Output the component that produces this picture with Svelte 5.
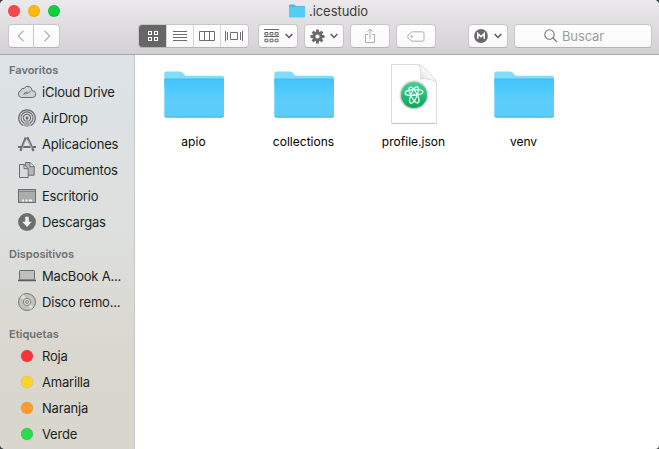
<script>
  const sections = [
    {
      title: 'Favoritos',
      items: [
        ['cloud', 'iCloud Drive'],
        ['airdrop', 'AirDrop'],
        ['apps', 'Aplicaciones'],
        ['docs', 'Documentos'],
        ['desktop', 'Escritorio'],
        ['download', 'Descargas']
      ]
    },
    {
      title: 'Dispositivos',
      items: [
        ['laptop', 'MacBook A...'],
        ['disc', 'Disco remo...']
      ]
    },
    {
      title: 'Etiquetas',
      items: [
        ['red', 'Roja'],
        ['yellow', 'Amarilla'],
        ['orange', 'Naranja'],
        ['green', 'Verde']
      ]
    }
  ];
  const tags = { red: '#fb3236', yellow: '#fbd32b', orange: '#fd9c2e', green: '#27dc4c' };
  const files = [
    ['folder', 'apio'],
    ['folder', 'collections'],
    ['atom', 'profile.json'],
    ['folder', 'venv']
  ];
</script>

{#snippet chevron()}
  <svg class="chev" width="8" height="6" viewBox="0 0 8 6"><path d="M.6 1 4 4.400 7.400 1" fill="none" stroke="#555" stroke-width="1.400" /></svg>
{/snippet}

{#snippet sideIcon(kind)}
  <svg width="20" height="20" viewBox="0 0 20 20" fill="none" stroke="#6a6d6e" stroke-width="1">
    {#if kind === 'cloud'}
      <path d="M4.600 15.500a3.600 3.600 0 0 1-.4-7.100 2.300 2.300 0 0 1 2.900-2 4.300 4.300 0 0 1 8 2.300 3.400 3.400 0 0 1 .5 6.800z" fill="#cfd3d4" />
      <path d="M6.500 12.500 9 9.800l2 1.700 2.600-2.600M8 12.600l2-2" />
    {:else if kind === 'airdrop'}
      <path d="M6 17.400a8.300 8.300 0 1 1 8 0M7.200 15.200a6 6 0 1 1 5.600 0M8.200 12.900a3.600 3.600 0 1 1 3.600 0" stroke-width="1.200" />
      <path d="M10 9.500 6.200 17.800a9 9 0 0 0 7.600 0z" fill="#6a6d6e" stroke="none" opacity=".5" />
      <circle cx="10" cy="9.700" r="1.500" fill="#6a6d6e" stroke="none" />
    {:else if kind === 'apps'}
      <path d="M8.800 3.500 3.400 16.800M10.300 3.200 16.500 17" stroke-width="2.200" />
      <path d="M1 13h3M6 13h7.500M16 13h3" stroke-width="1.800" />
      <path d="M8.500 6.500 5 15M11.200 6.500 15 15" stroke="#d9dddf" stroke-width=".6" />
    {:else if kind === 'docs'}
      <path d="M8.500 2.500h4.700l4 4v8.700H8.500z" fill="#b4b7b8" />
      <path d="M13 2.500v4.200h4.200" fill="#e2e4e4" />
      <path d="M2.500 4.500h4.700l4 4v9H2.500z" fill="#d8dbdc" />
      <path d="M7 4.500v4.200h4.200" />
    {:else if kind === 'desktop'}
      <rect x="1.500" y="3.500" width="17" height="13" fill="#a9adac" />
      <path d="M2 5.500h16" stroke="#858988" />
      <path d="M5 14.500h2m1.500 0h2m1.500 0h3" stroke="#f2f2f0" stroke-width="2" />
    {:else if kind === 'download'}
      <circle cx="10" cy="10" r="8.900" fill="#6d6e6d" stroke="none" />
      <path d="M8.200 4.800h3.600v5h3L10 15.100 5.200 9.800h3z" fill="#eef0ee" stroke="none" />
    {:else if kind === 'laptop'}
      <rect x="2.500" y="4.500" width="15" height="9.500" rx=".7" fill="#bec0bd" />
      <path d="M1 14.500h18" stroke="#5c5e5c" stroke-width="1.600" />
    {:else if kind === 'disc'}
      <circle cx="10" cy="10" r="8.500" fill="#c2c2be" stroke="#777874" />
      <path d="M10 10 3.600 5.200a8 8 0 0 1 3.300-2.600zM10 10l6.400 4.800a8 8 0 0 1-3.300 2.600z" fill="#deded9" stroke="none" />
      <circle cx="10" cy="10" r="3.700" fill="#d8d8d3" stroke="#858681" />
      <circle cx="10" cy="10" r="1.400" fill="#efefeb" stroke="#777874" />
    {:else}
      <circle cx="10" cy="10" r="6" fill={tags[kind]} stroke="#0002" stroke-width=".5" />
    {/if}
  </svg>
{/snippet}

<div class="desk">
  <div class="window">
    <header>
      <div class="titlebar">
        <div class="lights"><i class="close"></i><i class="min"></i><i class="max"></i></div>
        <div class="title">
          <svg width="16" height="14" viewBox="0 0 16 14"><path d="M0 1.500Q0 .5 1 .5h4.500l1.500 1.500h8q1 0 1 1V5H0z" fill="#4db9e6" /><rect y="3" width="16" height="10.500" rx="1" fill="#55cdf7" /></svg>
          <span>.icestudio</span>
        </div>
      </div>
      <div class="toolbar">
        <div class="btn nav"><svg width="8" height="12" viewBox="0 0 8 12"><path d="M6.500.8 1.300 6l5.200 5.200" fill="none" stroke="#b2b2b2" stroke-width="1.300" /></svg></div>
        <div class="btn nav next"><svg width="8" height="12" viewBox="0 0 8 12"><path d="M1.500.8 6.700 6l-5.200 5.200" fill="none" stroke="#b2b2b2" stroke-width="1.300" /></svg></div>
        <div class="btn views">
          <div class="view on">
            <svg width="12" height="12" viewBox="0 0 12 12" fill="none" stroke="#fff"><rect x="1.500" y="1.500" width="3" height="3" /><rect x="7.500" y="1.500" width="3" height="3" /><rect x="1.500" y="7.500" width="3" height="3" /><rect x="7.500" y="7.500" width="3" height="3" /></svg>
          </div>
          <div class="view"><svg width="14" height="12" viewBox="0 0 14 12" stroke="#6c6c6c"><path d="M0 1.500h14M0 4.500h14M0 7.500h14M0 10.500h14" /></svg></div>
          <div class="view"><svg width="16" height="12" viewBox="0 0 16 12" fill="none" stroke="#6c6c6c"><path d="M.5 1.500h15v9H.5zM5.500 1.500v9M10.500 1.500v9" /></svg></div>
          <div class="view"><svg width="20" height="12" viewBox="0 0 20 12" fill="none" stroke="#6c6c6c"><path d="M1.500 1v10M3.500 2v8M18.500 1v10M16.500 2v8M6.500 2.500h7v7h-7z" /></svg></div>
        </div>
        <div class="btn arrange">
          <svg width="16" height="14" viewBox="0 0 16 14" fill="none" stroke="#666">
            <path d="M0 .5h15M0 7.500h15" /><path d="M.9 3.500h3v2.500h-3zM6 3.500h3v2.500H6zM11.100 3.500h3v2.500h-3zM.9 10.200h3v2.500h-3zM6 10.200h3v2.500H6zM11.100 10.200h3v2.500h-3z" />
          </svg>
          {@render chevron()}
        </div>
        <div class="btn action">
          <svg width="15" height="15" viewBox="-7.500 -7.500 15 15">
            {#each [0, 45, 90, 135] as a}<rect x="-1.500" y="-7" width="3" height="14" rx=".6" fill="#6a6a6a" transform="rotate({a})" />{/each}
            <circle r="5.100" fill="#6a6a6a" /><circle r="2.100" fill="#fbfbfb" />
          </svg>
          {@render chevron()}
        </div>
        <div class="btn share"><svg width="12" height="16" viewBox="0 0 12 16" fill="none" stroke="#b0b0b0"><path d="M4 6.500H1.500v8h9v-8H8M6 11V1.200M3.300 3.800 6 1.100l2.700 2.700" /></svg></div>
        <div class="btn tag"><svg width="18" height="11" viewBox="0 0 18 11" fill="none" stroke="#b0b0b0"><path d="M5 .8h10.500q1.500 0 1.500 1.500v6.400q0 1.500-1.500 1.500H5L1.100 7Q.2 5.500 1.100 4z" /><circle cx="4.700" cy="5.500" r=".9" /></svg></div>
        <div class="btn mega">
          <svg width="14" height="14" viewBox="0 0 14 14"><circle cx="7" cy="7" r="6.900" fill="#6a6a6a" /><path d="M3.800 9.800V4.600L7 7.700l3.200-3.100v5.200" fill="none" stroke="#fff" stroke-width="1.500" /></svg>
          {@render chevron()}
        </div>
        <div class="btn search">
          <svg width="14" height="14" viewBox="0 0 14 14" fill="none" stroke="#757575" stroke-width="1.100"><circle cx="5.500" cy="5.500" r="4.700" /><path d="m9 9 4 4" /></svg>
          <span>Buscar</span>
        </div>
      </div>
    </header>
    <div class="body">
      <aside>
        {#each sections as s}
          <h2>{s.title}</h2>
          <ul>
            {#each s.items as [kind, label]}
              <li>{@render sideIcon(kind)}<span>{label}</span></li>
            {/each}
          </ul>
        {/each}
      </aside>
      <main>
        {#each files as [kind, name]}
          <div class="file">
            {#if kind === 'folder'}
              <svg width="64" height="64" viewBox="0 0 64 64">
                <defs><linearGradient id="front" x2="0" y2="1"><stop offset="0" stop-color="#3fc4fb" /><stop offset=".55" stop-color="#5ecefc" /><stop offset="1" stop-color="#5bcdfa" /></linearGradient></defs>
                <path d="M2.300 11.500q0-2 2-2H18q1.500 0 2.500 1l2.200 2.400q1 .9 2.500.9H60q2 0 2 2V24H2.300z" fill="#7fdcfb" />
                <path d="M2.300 17H62v36.500q0 2-2 2H4.300q-2 0-2-2z" fill="url(#front)" />
                <path d="M2.800 17h58.700" stroke="#43b9ea" stroke-width=".9" />
                <path d="M2.600 53.900q.4 1.200 1.700 1.200H60q1.300 0 1.700-1.200" stroke="#52abd0" stroke-width=".9" fill="none" />
              </svg>
            {:else}
              <svg width="64" height="64" viewBox="0 0 64 64">
                <defs>
                  <linearGradient id="green" x2="0" y2="1"><stop offset="0" stop-color="#3fd397" /><stop offset="1" stop-color="#0ea55d" /></linearGradient>
                  <linearGradient id="fold" x1="1" y1="0" x2="0" y2="1"><stop offset=".4" stop-color="#fff" /><stop offset="1" stop-color="#d8d8d8" /></linearGradient>
                </defs>
                <path d="M9.500 2.500H37Q43 6 54.500 20v41.300h-45z" fill="#fefefe" stroke="#dcdcdc" />
                <path d="M9.500 61.500h45" stroke="#c6c6c6" />
                <path d="M37 2.500q3 6 1.200 14.500 9-1.500 16.300 3.500Q47 8 37 2.500z" fill="url(#fold)" stroke="#d4d4d4" stroke-width=".8" />
                <circle cx="32" cy="33" r="14.400" fill="#d9d4d2" />
                <circle cx="32" cy="33" r="13" fill="url(#green)" />
                <g fill="none" stroke="#e9fff4" stroke-width="1.200">
                  <ellipse cx="32" cy="30.500" rx="9" ry="2.900" transform="rotate(-4 32 30.500)" />
                  <ellipse cx="32" cy="33" rx="8.800" ry="3" transform="rotate(62 32 33)" />
                  <ellipse cx="32" cy="33" rx="8.800" ry="3" transform="rotate(112 32 33)" />
                </g>
                <circle cx="32" cy="32.500" r="1.100" fill="#fff" />
              </svg>
            {/if}
            <span>{name}</span>
          </div>
        {/each}
      </main>
    </div>
  </div>
</div>

<style>
  .desk { width: 659px; height: 449px; background: #37423f; overflow: hidden; }
  .window {
    display: flex; flex-direction: column; width: 659px; height: 449px; overflow: hidden;
    border-radius: 5px 5px 4px 5px; background: #fff; color: #1d1f20;
    font: 13px/16px Inter, "Liberation Sans", sans-serif;
  }
  svg { display: block; flex: none; }
  header {
    box-sizing: border-box; height: 55px; flex: none; border-bottom: 1px solid #a9a7a9;
    background: linear-gradient(#ebe9eb, #d3d1d3);
  }
  .titlebar { display: grid; grid-template-columns: 100px 1fr 100px; height: 24px; }
  .lights { display: flex; gap: 8px; padding: 5px 0 0 8px; }
  .lights i { box-sizing: border-box; width: 12px; height: 12px; border-radius: 50%; border: 1px solid #0001; }
  .close { background: #f9484b; }
  .min { background: #fdb90e; }
  .max { background: #0dd13b; }
  .title { display: flex; justify-content: center; gap: 4px; padding: 4px 2px 0 0; color: #3c3b3c; letter-spacing: -.05px; }
  .title span { margin-top: -1px; }
  .toolbar { display: flex; padding-left: 8px; }
  .btn {
    box-sizing: border-box; display: flex; align-items: center; justify-content: center; height: 24px;
    border: 1px solid #c8c6c8; border-bottom-color: #b5b3b5; border-radius: 4px;
    background: linear-gradient(#fff, #f8f8f8);
  }
  .nav { width: 26px; border-radius: 4px 0 0 4px; }
  .next { border-left: 0; border-radius: 0 4px 4px 0; }
  .views { width: 111px; margin-left: 78px; overflow: hidden; justify-content: flex-start; }
  .view { display: flex; flex: none; align-items: center; justify-content: center; width: 27px; height: 24px; border-left: 1px solid #d8d7d8; box-sizing: border-box; }
  .view.on { width: 28px; margin-left: -1px; padding-left: 1px; background: #666; border: 0; }
  .arrange { width: 40px; margin-left: 9px; gap: 5px; }
  .action { width: 40px; margin-left: 6px; gap: 5px; }
  .share { width: 40px; margin-left: 6px; }
  .tag { width: 40px; margin-left: 6px; }
  .mega { width: 40px; margin-left: 32px; gap: 6px; }
  .search { width: 138px; margin-left: 6px; gap: 4px; padding-right: 18px; color: #9b9b9b; letter-spacing: -.1px; }
  .body { display: flex; flex: 1; min-height: 0; }
  aside {
    box-sizing: border-box; width: 135px; overflow: hidden; border-right: 1px solid #c5c5c3;
    background: linear-gradient(#dde3e7, #dcdfdd 45%, #dad7cf 75%, #d9d6ce);
  }
  h2 { margin: 0; padding-left: 9px; height: 28px; line-height: 39px; font-size: 11px; font-weight: 600; color: #6d7072; }
  h2:first-child { height: 24px; line-height: 30px; }
  ul { margin: 0; padding: 0; list-style: none; }
  li { display: flex; align-items: center; height: 26px; padding-left: 17px; gap: 5px; white-space: nowrap; letter-spacing: -.2px; }
  main { display: flex; align-items: flex-start; padding: 7px 0 0 4px; color: #000; }
  .file { display: flex; flex-direction: column; align-items: center; gap: 8px; width: 110px; font-size: 12px; }
  .file span { padding-right: 1px; letter-spacing: .02px; }
</style>
